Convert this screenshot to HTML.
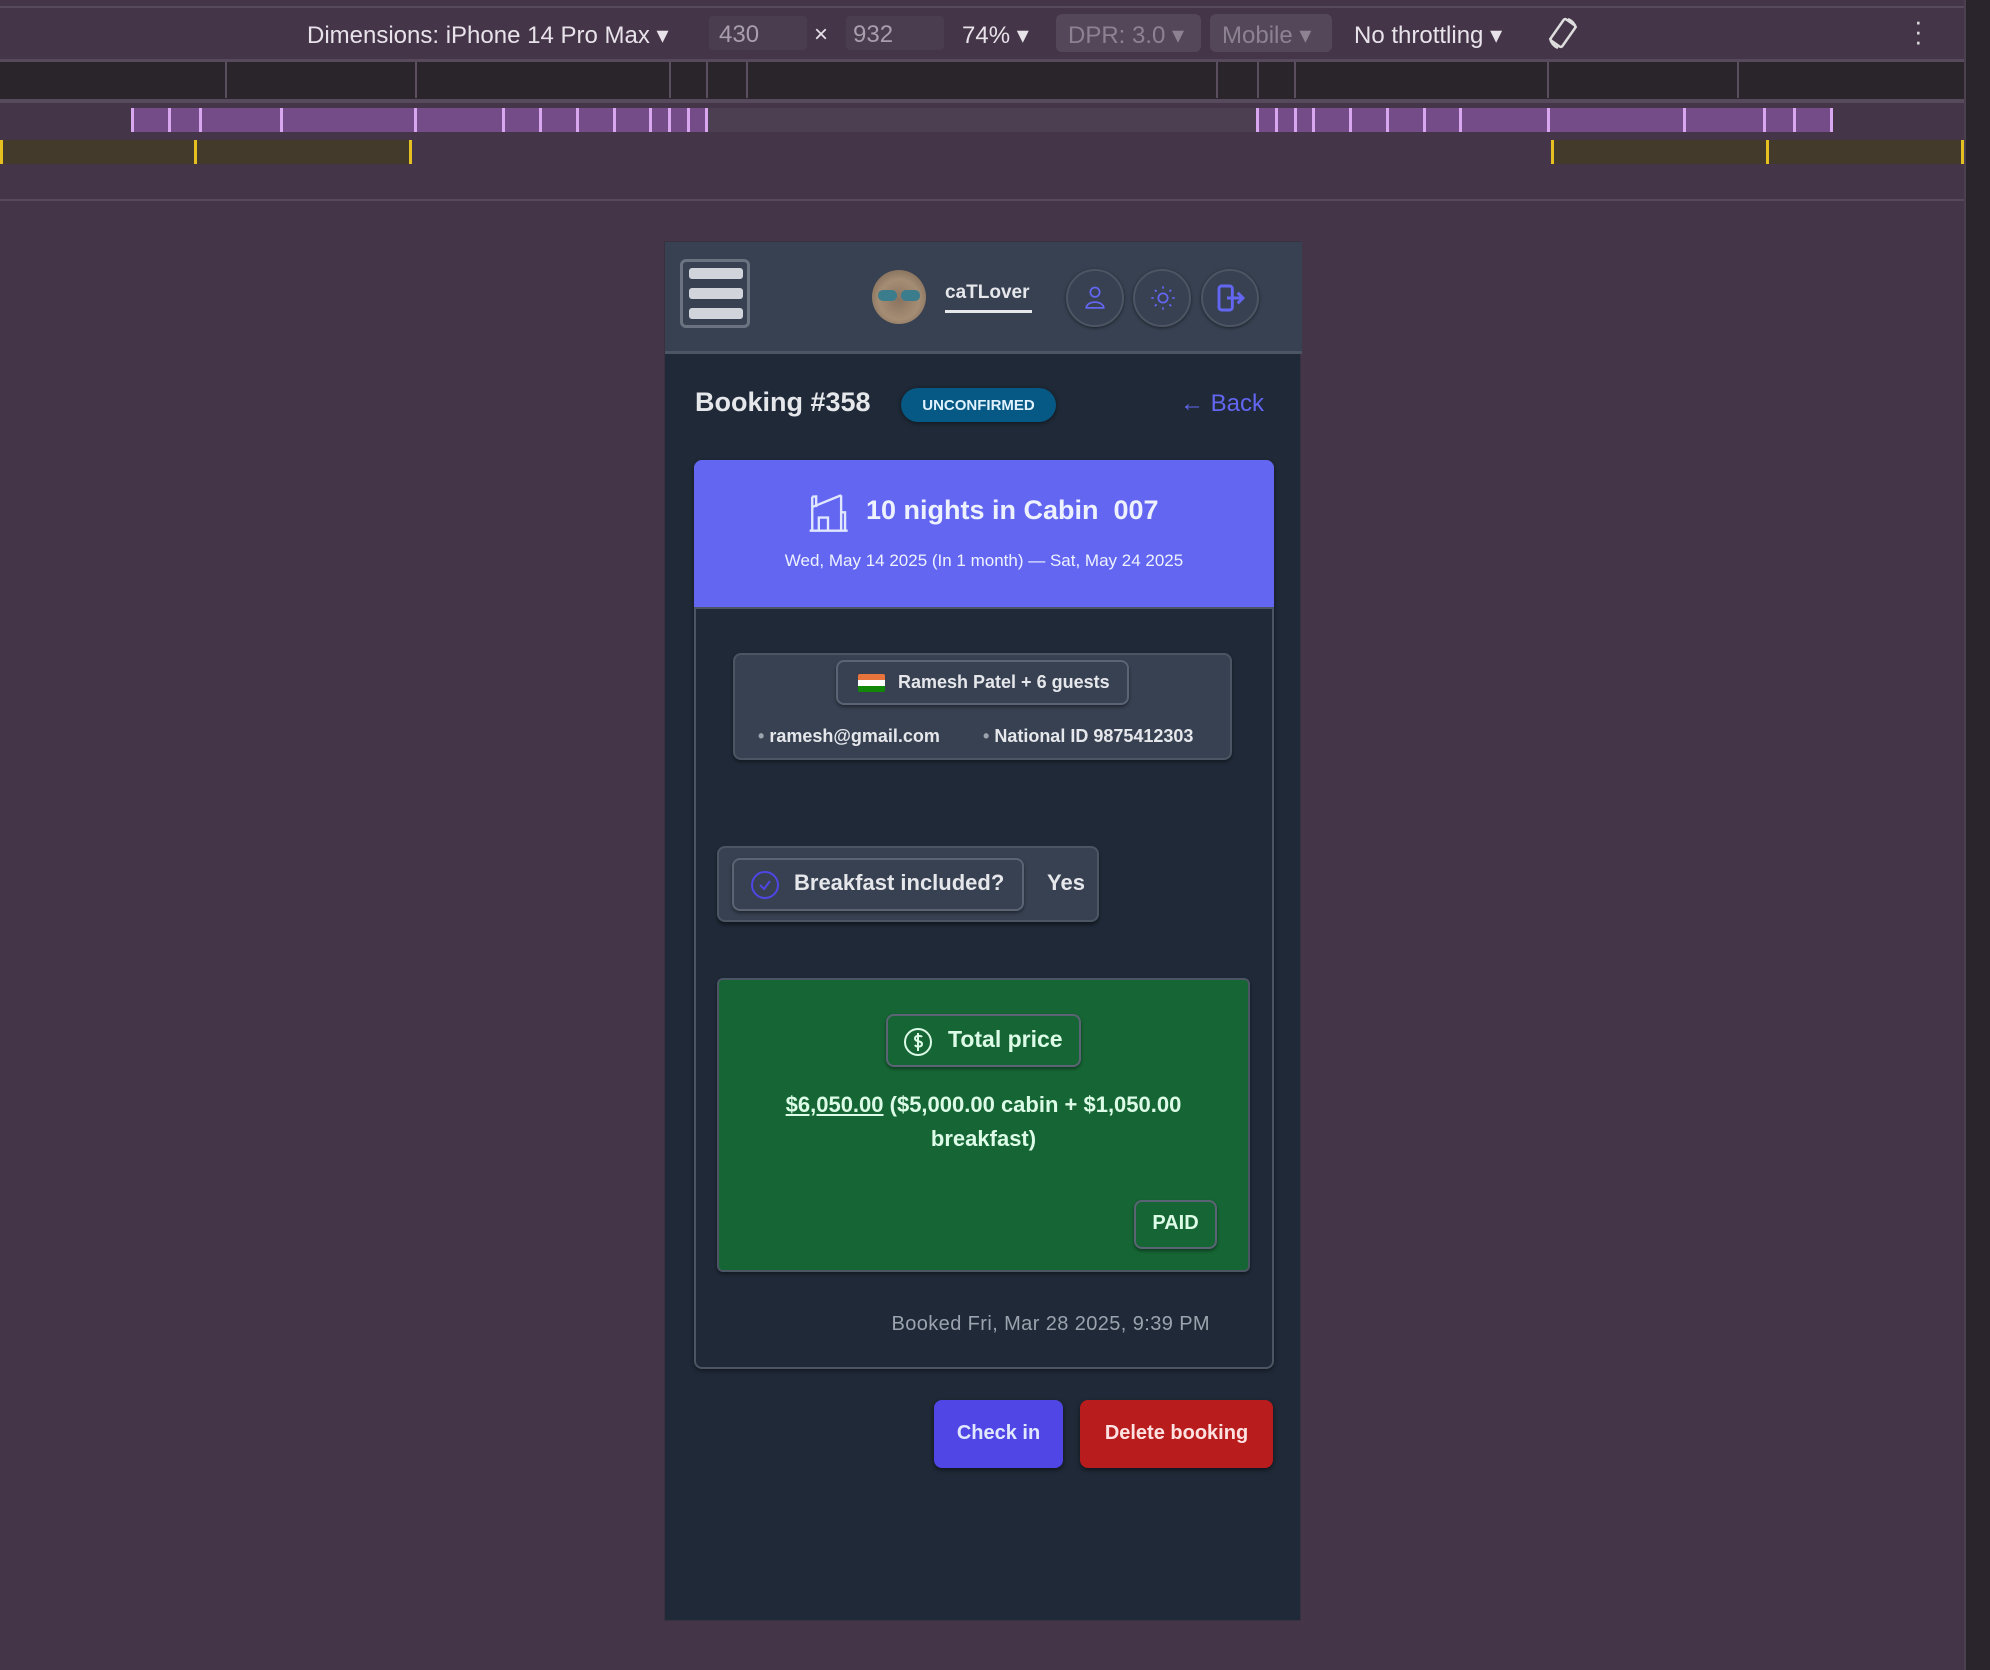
<!DOCTYPE html>
<html><head><meta charset="utf-8"><style>
*{box-sizing:border-box;margin:0;padding:0}
body{width:1990px;height:1670px;background:#443548;font-family:"Liberation Sans",sans-serif;position:relative;overflow:hidden}
.a{position:absolute}
.t{position:absolute;white-space:nowrap}
.ph{font-family:"Liberation Sans",sans-serif}
.pill{position:absolute;border:2px solid #5b6474;border-radius:8px;box-shadow:0 2px 3px rgba(0,0,0,.4)}
.tk{position:absolute;top:108px;width:3px;height:24px;background:#d9a6f0}
</style></head><body>
<div class="a" style="left:0;top:0;width:1964px;height:8px;background:#443548;border-bottom:2px solid #574a5c"></div>
<div class="a" style="left:0;top:59px;width:1964px;height:3px;background:#574a5c"></div>
<div class="t" style="left:307px;top:21px;font-size:24px;color:#e8e3ea">Dimensions: iPhone 14 Pro Max ▾</div>
<div class="a" style="left:709px;top:16px;width:98px;height:34px;background:#4a3d4f;border-radius:4px"></div>
<div class="t" style="left:719px;top:21px;font-size:24px;color:#a89ead">430</div>
<div class="t" style="left:814px;top:21px;font-size:24px;color:#e8e3ea">×</div>
<div class="a" style="left:846px;top:16px;width:98px;height:34px;background:#4a3d4f;border-radius:4px"></div>
<div class="t" style="left:853px;top:21px;font-size:24px;color:#a89ead">932</div>
<div class="t" style="left:962px;top:21px;font-size:24px;color:#e8e3ea">74% ▾</div>
<div class="a" style="left:1056px;top:14px;width:145px;height:38px;background:#54475a;border-radius:6px"></div>
<div class="t" style="left:1068px;top:21px;font-size:24px;color:#8d8292">DPR: 3.0 ▾</div>
<div class="a" style="left:1210px;top:14px;width:122px;height:38px;background:#54475a;border-radius:6px"></div>
<div class="t" style="left:1222px;top:21px;font-size:24px;color:#8d8292">Mobile ▾</div>
<div class="t" style="left:1354px;top:21px;font-size:24px;color:#e8e3ea">No throttling ▾</div>
<svg class="a" style="left:1546px;top:16px" width="36" height="36" viewBox="0 0 36 36" fill="none" stroke="#ddd" stroke-width="2.5"><rect x="10" y="4" width="14" height="26" rx="2" transform="rotate(35 17 17)"/><path d="M4 22a14 14 0 0 0 8 10M30 12a14 14 0 0 0-8-9"/></svg>
<div class="t" style="left:1914px;top:16px;font-size:26px;color:#ddd;line-height:10px">·<br>·<br>·</div>
<div class="a" style="left:0;top:62px;width:1964px;height:38px;background:#29252b"></div>
<div class="a" style="left:0;top:99px;width:1964px;height:4px;background:#574a5c"></div>
<div class="a" style="left:225px;top:62px;width:2px;height:36px;background:#5a4e5f"></div>
<div class="a" style="left:415px;top:62px;width:2px;height:36px;background:#5a4e5f"></div>
<div class="a" style="left:669px;top:62px;width:2px;height:36px;background:#5a4e5f"></div>
<div class="a" style="left:706px;top:62px;width:2px;height:36px;background:#5a4e5f"></div>
<div class="a" style="left:746px;top:62px;width:2px;height:36px;background:#5a4e5f"></div>
<div class="a" style="left:1216px;top:62px;width:2px;height:36px;background:#5a4e5f"></div>
<div class="a" style="left:1257px;top:62px;width:2px;height:36px;background:#5a4e5f"></div>
<div class="a" style="left:1294px;top:62px;width:2px;height:36px;background:#5a4e5f"></div>
<div class="a" style="left:1547px;top:62px;width:2px;height:36px;background:#5a4e5f"></div>
<div class="a" style="left:1737px;top:62px;width:2px;height:36px;background:#5a4e5f"></div>
<div class="a" style="left:131px;top:108px;width:1701px;height:24px;background:#744c88"></div>
<div class="a" style="left:708px;top:108px;width:548px;height:24px;background:#4b3f51"></div>
<div class="tk" style="left:131px"></div><div class="tk" style="left:168px"></div><div class="tk" style="left:199px"></div><div class="tk" style="left:280px"></div><div class="tk" style="left:414px"></div><div class="tk" style="left:502px"></div><div class="tk" style="left:539px"></div><div class="tk" style="left:576px"></div><div class="tk" style="left:613px"></div><div class="tk" style="left:649px"></div><div class="tk" style="left:668px"></div><div class="tk" style="left:687px"></div><div class="tk" style="left:705px"></div><div class="tk" style="left:1256px"></div><div class="tk" style="left:1275px"></div><div class="tk" style="left:1294px"></div><div class="tk" style="left:1312px"></div><div class="tk" style="left:1349px"></div><div class="tk" style="left:1386px"></div><div class="tk" style="left:1423px"></div><div class="tk" style="left:1459px"></div><div class="tk" style="left:1547px"></div><div class="tk" style="left:1683px"></div><div class="tk" style="left:1763px"></div><div class="tk" style="left:1793px"></div><div class="tk" style="left:1830px"></div>
<div class="a" style="left:0;top:140px;width:412px;height:24px;background:#433a2c;border-left:3px solid #e6c020;border-right:3px solid #e6c020"></div>
<div class="a" style="left:194px;top:140px;width:3px;height:24px;background:#e6c020"></div>
<div class="a" style="left:1551px;top:140px;width:413px;height:24px;background:#433a2c;border-left:3px solid #e6c020;border-right:3px solid #e6c020"></div>
<div class="a" style="left:1766px;top:140px;width:3px;height:24px;background:#e6c020"></div>
<div class="a" style="left:0;top:199px;width:1964px;height:2px;background:#574a5c"></div>
<div class="a" style="left:1964px;top:0;width:26px;height:1670px;background:#2a252c;border-left:2px solid #4a404e"></div>

<div class="a ph" style="left:664px;top:241px;width:637px;height:1380px;background:#1f2937;border:1px solid #3a3140">
 <div class="a" style="left:0;top:0;width:637px;height:112px;background:#374151;border-bottom:3px solid #4b5563"></div>
 <div class="a" style="left:15px;top:17px;width:70px;height:69px;border:3px solid #6b7280;border-radius:6px;background:#374151"></div>
 <div class="a" style="left:24px;top:26px;width:54px;height:11px;background:#d1d5db;border-radius:3px"></div>
 <div class="a" style="left:24px;top:46px;width:54px;height:11px;background:#d1d5db;border-radius:3px"></div>
 <div class="a" style="left:24px;top:66px;width:54px;height:11px;background:#d1d5db;border-radius:3px"></div>
 <div class="a" style="left:207px;top:28px;width:54px;height:54px;border-radius:50%;background:radial-gradient(circle at 50% 55%,#8a7360,#a58d74 50%,#6d5a4a)"></div>
 <div class="a" style="left:213px;top:48px;width:19px;height:11px;border-radius:5px;background:#3b7d8c"></div>
 <div class="a" style="left:236px;top:48px;width:19px;height:11px;border-radius:5px;background:#3b7d8c"></div>
 <div class="t" style="left:280px;top:40px;font-size:19px;color:#e5e7eb;font-weight:bold">caTLover</div>
 <div class="a" style="left:280px;top:68px;width:87px;height:3px;background:#e5e7eb"></div>
 <div class="a" style="left:401px;top:27px;width:58px;height:58px;border-radius:50%;border:2px solid #4b5563;box-shadow:0 1px 3px rgba(0,0,0,.5)"></div>
 <div class="a" style="left:468px;top:27px;width:58px;height:58px;border-radius:50%;border:2px solid #4b5563;box-shadow:0 1px 3px rgba(0,0,0,.5)"></div>
 <div class="a" style="left:536px;top:27px;width:58px;height:58px;border-radius:50%;border:2px solid #4b5563;box-shadow:0 1px 3px rgba(0,0,0,.5)"></div>
 <svg class="a" style="left:416px;top:42px" width="28" height="28" viewBox="0 0 24 24" fill="none" stroke="#6366f1" stroke-width="1.5"><circle cx="12" cy="7" r="4"/><path d="M4.5 20.5a7.5 5 0 0 1 15 0z"/></svg>
 <svg class="a" style="left:484px;top:42px" width="28" height="28" viewBox="0 0 24 24" fill="none" stroke="#6366f1" stroke-width="1.5"><circle cx="12" cy="12" r="4"/><path d="M12 2v2M12 20v2M2 12h2M20 12h2M5 5l1.5 1.5M17.5 17.5L19 19M5 19l1.5-1.5M17.5 6.5L19 5"/></svg>
 <svg class="a" style="left:550px;top:40px" width="32" height="32" viewBox="0 0 24 24" fill="none" stroke="#6366f1" stroke-width="2.2"><rect x="3" y="3" width="10" height="18" rx="2"/><path d="M9 12h12M17 8l4 4-4 4"/></svg>

 <div class="t" style="left:30px;top:145px;font-size:27px;color:#e5e7eb;font-weight:bold">Booking #358</div>
 <div class="a" style="left:236px;top:146px;width:155px;height:34px;border-radius:17px;background:#075985;box-shadow:0 1px 4px rgba(0,0,0,.5)"></div>
 <div class="t" style="left:236px;top:155px;width:155px;text-align:center;font-size:15px;color:#e0f2fe;font-weight:bold">UNCONFIRMED</div>
 <div class="t" style="left:515px;top:148px;font-size:24px;color:#6366f1">← Back</div>

 <div class="a" style="left:29px;top:218px;width:580px;height:909px;border:2px solid #4b5563;border-radius:8px;box-shadow:0 2px 4px rgba(0,0,0,.4)"></div>
 <div class="a" style="left:29px;top:218px;width:580px;height:149px;background:#6366f1;border-radius:8px 8px 0 0;border-bottom:2px solid #4b5563"></div>
 <svg class="a" style="left:142px;top:248px" width="42" height="42" viewBox="0 0 32 32" fill="none" stroke="#e0e7ff" stroke-width="1.8"><path d="M2 31h29M4 31V5M4 5h3M7 4v9M4 13l22-9M26 4v27M26 17h3v14M9 31V21h7v10"/></svg>
 <div class="t" style="left:201px;top:253px;font-size:27px;color:#eef2ff;font-weight:bold">10 nights in Cabin&nbsp; 007</div>
 <div class="t" style="left:29px;top:309px;width:580px;text-align:center;font-size:17px;color:#eef2ff">Wed, May 14 2025 (In 1 month) — Sat, May 24 2025</div>

 <div class="a" style="left:68px;top:411px;width:499px;height:107px;background:#374151;border-radius:8px;border:2px solid #4b5563;box-shadow:0 2px 3px rgba(0,0,0,.4)"></div>
 <div class="pill" style="left:171px;top:418px;width:293px;height:45px;background:#374151"></div>
 <div class="a" style="left:193px;top:432px;width:27px;height:18px;border-radius:2px;background:linear-gradient(#e8743b 33%,#fff 33% 66%,#138808 66%)"></div>
 <div class="t" style="left:233px;top:430px;font-size:18px;color:#e5e7eb;font-weight:bold">Ramesh Patel + 6 guests</div>
 <div class="t" style="left:93px;top:484px;font-size:18px;color:#e5e7eb;font-weight:bold"><span style="color:#9ca3af">•</span> ramesh@gmail.com</div>
 <div class="t" style="left:318px;top:484px;font-size:18px;color:#e5e7eb;font-weight:bold"><span style="color:#9ca3af">•</span> National ID 9875412303</div>

 <div class="a" style="left:52px;top:604px;width:382px;height:76px;background:#374151;border-radius:8px;border:2px solid #4b5563;box-shadow:0 3px 3px rgba(0,0,0,.4)"></div>
 <div class="pill" style="left:67px;top:616px;width:292px;height:53px;background:#374151"></div>
 <svg class="a" style="left:85px;top:628px" width="30" height="30" viewBox="0 0 30 30" fill="none" stroke="#4f46e5" stroke-width="2"><circle cx="15" cy="15" r="13"/><path d="M10 15l4 4 6-8"/></svg>
 <div class="t" style="left:129px;top:628px;font-size:22px;color:#e5e7eb;font-weight:bold">Breakfast included?</div>
 <div class="t" style="left:382px;top:628px;font-size:22px;color:#e5e7eb;font-weight:bold">Yes</div>

 <div class="a" style="left:52px;top:736px;width:533px;height:294px;background:#166534;border-radius:6px;border:2px solid #4b5563;box-shadow:0 2px 3px rgba(0,0,0,.4)"></div>
 <div class="pill" style="left:221px;top:772px;width:195px;height:53px;background:#166534"></div>
 <svg class="a" style="left:238px;top:785px" width="30" height="30" viewBox="0 0 30 30" fill="none" stroke="#dcfce7" stroke-width="2"><circle cx="15" cy="15" r="13"/><path d="M19 10c-1-1.5-7-2-7 1.5s7 2 7 5.5-6 3-7 1M15 6v18"/></svg>
 <div class="t" style="left:283px;top:784px;font-size:23px;color:#dcfce7;font-weight:bold">Total price</div>
 <div class="t" style="left:52px;top:846px;width:533px;text-align:center;font-size:22px;line-height:34px;color:#dcfce7;font-weight:bold;white-space:normal;padding:0 30px"><span style="text-decoration:underline">$6,050.00</span> ($5,000.00 cabin + $1,050.00 breakfast)</div>
 <div class="pill" style="left:469px;top:958px;width:83px;height:49px;background:#166534"></div>
 <div class="t" style="left:469px;top:970px;width:83px;text-align:center;font-size:20px;color:#dcfce7;font-weight:bold">PAID</div>

 <div class="t" style="right:90px;top:1071px;font-size:20px;color:#9ca3af;letter-spacing:0.4px">Booked Fri, Mar 28 2025, 9:39 PM</div>

 <div class="a" style="left:269px;top:1158px;width:129px;height:68px;background:#4f46e5;border-radius:8px;box-shadow:0 2px 4px rgba(0,0,0,.5)"></div>
 <div class="t" style="left:269px;top:1180px;width:129px;text-align:center;font-size:20px;color:#e0e7ff;font-weight:bold">Check in</div>
 <div class="a" style="left:415px;top:1158px;width:193px;height:68px;background:#b91c1c;border-radius:8px;box-shadow:0 2px 4px rgba(0,0,0,.5)"></div>
 <div class="t" style="left:415px;top:1180px;width:193px;text-align:center;font-size:20px;color:#fee2e2;font-weight:bold">Delete booking</div>
</div>
</body></html>
